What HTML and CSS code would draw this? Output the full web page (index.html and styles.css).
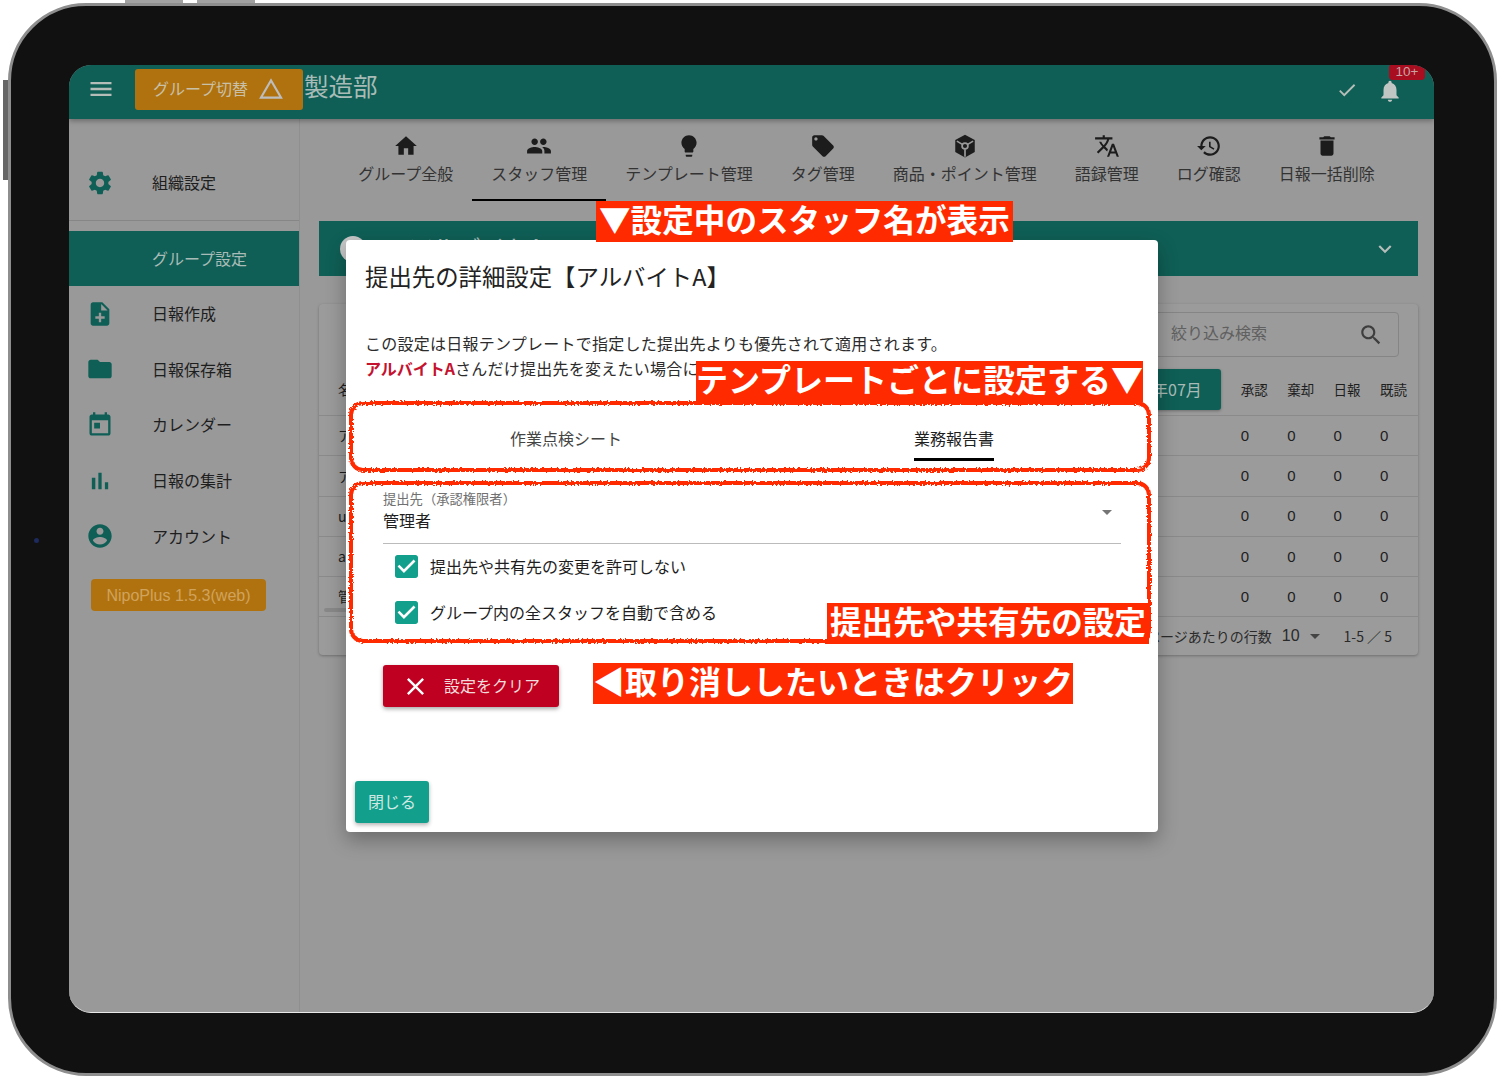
FILE: index.html
```html
<!doctype html>
<html lang="ja">
  <head>
    <meta charset="UTF-8">
    <meta name="viewport" content="width=device-width, initial-scale=1.0">
    <title>提出先の詳細設定</title>
    <link rel="stylesheet" href="styles.css">
  </head>
  <body>
    <svg class="defs" width="0" height="0" aria-hidden="true">
      <filter id="rough" x="-2%" y="-5%" width="104%" height="110%">
        <feTurbulence type="fractalNoise" baseFrequency="0.45" numOctaves="2" seed="4"></feTurbulence>
        <feDisplacementMap in="SourceGraphic" scale="4"></feDisplacementMap>
      </filter>
    </svg>

    <div class="device">
      <span class="btn-top btn-top-1"></span>
      <span class="btn-top btn-top-2"></span>
      <span class="btn-side"></span>
      <span class="camera"></span>

      <div class="screen">
        <!-- app bar -->
        <header class="appbar">
          <svg class="icon menu-icon" viewBox="0 0 24 24"><path d="M3 18h18v-2H3v2zm0-5h18v-2H3v2zm0-7v2h18V6H3z"/></svg>
          <button class="group-btn">
            <span>グループ切替</span>
            <svg class="icon" viewBox="0 0 24 24"><path d="M12 5.99L19.53 19H4.47L12 5.99M12 2L1 21h22L12 2z"/></svg>
          </button>
          <span class="appbar-title">製造部</span>
          <svg class="icon check-icon" viewBox="0 0 24 24"><path d="M9 16.17L4.83 12l-1.42 1.41L9 19 21 7l-1.41-1.41z"/></svg>
          <div class="bell">
            <svg class="icon" viewBox="0 0 24 24"><path d="M12 22c1.1 0 2-.9 2-2h-4c0 1.1.89 2 2 2zm6-6v-5c0-3.07-1.64-5.64-4.5-6.32V4c0-.83-.67-1.5-1.5-1.5s-1.5.67-1.5 1.5v.68C7.63 5.36 6 7.92 6 11v5l-2 2v1h16v-1l-2-2z"/></svg>
            <span class="badge">10+</span>
          </div>
        </header>

        <div class="app-body">
          <!-- side menu -->
          <nav class="sidebar">
            <div class="side-top">
              <svg class="icon" viewBox="0 0 24 24"><path d="M19.14 12.94c.04-.3.06-.61.06-.94 0-.32-.02-.64-.07-.94l2.03-1.58c.18-.14.23-.41.12-.61l-1.92-3.32c-.12-.22-.37-.29-.59-.22l-2.39.96c-.5-.38-1.03-.7-1.62-.94l-.36-2.54c-.04-.24-.24-.41-.48-.41h-3.84c-.24 0-.43.17-.47.41l-.36 2.54c-.59.24-1.13.57-1.62.94l-2.39-.96c-.22-.08-.47 0-.59.22L2.74 8.87c-.12.21-.08.47.12.61l2.03 1.58c-.05.3-.09.63-.09.94s.02.64.07.94l-2.03 1.58c-.18.14-.23.41-.12.61l1.92 3.32c.12.22.37.29.59.22l2.39-.96c.5.38 1.03.7 1.62.94l.36 2.54c.05.24.24.41.48.41h3.84c.24 0 .44-.17.47-.41l.36-2.54c.59-.24 1.13-.56 1.62-.94l2.39.96c.22.08.47 0 .59-.22l1.92-3.32c.12-.22.07-.47-.12-.61l-2.01-1.58zM12 15.6c-1.98 0-3.6-1.62-3.6-3.6s1.62-3.6 3.6-3.6 3.6 1.62 3.6 3.6-1.62 3.6-3.6 3.6z"/></svg>
              <span>組織設定</span>
            </div>
            <div class="side-item active"><span>グループ設定</span></div>
            <div class="side-item">
              <svg class="icon" viewBox="0 0 24 24"><path d="M14 2H6c-1.1 0-1.99.9-1.99 2L4 20c0 1.1.89 2 1.99 2H18c1.1 0 2-.9 2-2V8l-6-6zm2 14h-3v3h-2v-3H8v-2h3v-3h2v3h3v2zm-3-7V3.5L18.5 9H13z"/></svg>
              <span>日報作成</span>
            </div>
            <div class="side-item">
              <svg class="icon" viewBox="0 0 24 24"><path d="M10 4H4c-1.1 0-1.99.9-1.99 2L2 18c0 1.1.9 2 2 2h16c1.1 0 2-.9 2-2V8c0-1.1-.9-2-2-2h-8l-2-2z"/></svg>
              <span>日報保存箱</span>
            </div>
            <div class="side-item">
              <svg class="icon" viewBox="0 0 24 24"><path d="M19 3h-1V1h-2v2H8V1H6v2H5c-1.11 0-1.99.9-1.99 2L3 19c0 1.1.89 2 2 2h14c1.1 0 2-.9 2-2V5c0-1.1-.9-2-2-2zm0 16H5V8h14v11zM7 10h5v5H7z"/></svg>
              <span>カレンダー</span>
            </div>
            <div class="side-item">
              <svg class="icon" viewBox="0 0 24 24"><path d="M5 9.2h3V19H5zM10.6 5h2.8v14h-2.8zm5.6 8H19v6h-2.8z"/></svg>
              <span>日報の集計</span>
            </div>
            <div class="side-item">
              <svg class="icon" viewBox="0 0 24 24"><path d="M12 2C6.48 2 2 6.48 2 12s4.48 10 10 10 10-4.48 10-10S17.52 2 12 2zm0 3c1.66 0 3 1.34 3 3s-1.34 3-3 3-3-1.34-3-3 1.34-3 3-3zm0 14.2c-2.5 0-4.71-1.28-6-3.22.03-1.99 4-3.08 6-3.08 1.99 0 5.97 1.09 6 3.08-1.29 1.94-3.5 3.22-6 3.22z"/></svg>
              <span>アカウント</span>
            </div>
            <div class="version">NipoPlus 1.5.3(web)</div>
          </nav>

          <main class="content">
            <!-- tabs -->
            <div class="tabs">
              <div class="tab">
                <svg class="icon" viewBox="0 0 24 24"><path d="M10 20v-6h4v6h5v-8h3L12 3 2 12h3v8z"/></svg>
                <span>グループ全般</span>
              </div>
              <div class="tab active">
                <svg class="icon" viewBox="0 0 24 24"><path d="M16 11c1.66 0 2.99-1.34 2.99-3S17.66 5 16 5c-1.66 0-3 1.34-3 3s1.34 3 3 3zm-8 0c1.66 0 2.99-1.34 2.99-3S9.66 5 8 5C6.34 5 5 6.34 5 8s1.34 3 3 3zm0 2c-2.33 0-7 1.17-7 3.5V19h14v-2.5c0-2.33-4.67-3.5-7-3.5zm8 0c-.29 0-.62.02-.97.05 1.16.84 1.97 1.97 1.97 3.45V19h6v-2.5c0-2.33-4.67-3.5-7-3.5z"/></svg>
                <span>スタッフ管理</span>
              </div>
              <div class="tab">
                <svg class="icon" viewBox="0 0 24 24"><path d="M9 21c0 .55.45 1 1 1h4c.55 0 1-.45 1-1v-1H9v1zm3-19C8.14 2 5 5.14 5 9c0 2.38 1.19 4.47 3 5.74V17c0 .55.45 1 1 1h6c.55 0 1-.45 1-1v-2.26c1.81-1.27 3-3.36 3-5.74 0-3.86-3.14-7-7-7z"/></svg>
                <span>テンプレート管理</span>
              </div>
              <div class="tab">
                <svg class="icon" viewBox="0 0 24 24"><path d="M21.41 11.58l-9-9C12.05 2.22 11.55 2 11 2H4c-1.1 0-2 .9-2 2v7c0 .55.22 1.05.59 1.42l9 9c.36.36.86.58 1.41.58.55 0 1.05-.22 1.41-.59l7-7c.37-.36.59-.86.59-1.41 0-.55-.23-1.06-.59-1.42zM5.5 7C4.67 7 4 6.33 4 5.5S4.67 4 5.5 4 7 4.67 7 5.5 6.33 7 5.5 7z"/></svg>
                <span>タグ管理</span>
              </div>
              <div class="tab">
                <svg class="icon" viewBox="0 0 24 24">
                  <path d="M12 1.5l9 5v11l-9 5-9-5v-11z"/>
                  <path class="cube-lines" d="M4.5 7.5l5 3M19.500 7.500l-5 3M12 15v7"/>
                  <circle class="cube-lines" cx="12" cy="12" r="2.700"/>
                </svg>
                <span>商品・ポイント管理</span>
              </div>
              <div class="tab">
                <svg class="icon" viewBox="0 0 24 24"><path d="M12.87 15.07l-2.54-2.51.03-.03c1.74-1.94 2.98-4.17 3.71-6.53H17V4h-7V2H8v2H1v1.99h11.17C11.5 7.92 10.44 9.75 9 11.35 8.07 10.32 7.3 9.19 6.69 8h-2c.73 1.63 1.73 3.17 2.98 4.56l-5.09 5.02L4 19l5-5 3.11 3.11.76-2.04zM18.5 10h-2L12 22h2l1.12-3h4.75L21 22h2l-4.5-12zm-2.62 7l1.62-4.33L19.12 17h-3.24z"/></svg>
                <span>語録管理</span>
              </div>
              <div class="tab">
                <svg class="icon" viewBox="0 0 24 24"><path d="M13 3c-4.97 0-9 4.03-9 9H1l3.89 3.89.07.14L9 12H6c0-3.87 3.13-7 7-7s7 3.13 7 7-3.13 7-7 7c-1.93 0-3.68-.79-4.94-2.06l-1.42 1.42C8.27 19.99 10.51 21 13 21c4.97 0 9-4.03 9-9s-4.03-9-9-9zm-1 5v5l4.28 2.54.72-1.21-3.5-2.08V8H12z"/></svg>
                <span>ログ確認</span>
              </div>
              <div class="tab">
                <svg class="icon" viewBox="0 0 24 24"><path d="M6 19c0 1.1.9 2 2 2h8c1.1 0 2-.9 2-2V7H6v12zM19 4h-3.500l-1-1h-5l-1 1H5v2h14V4z"/></svg>
                <span>日報一括削除</span>
              </div>
            </div>

            <div class="staff-bar">
              <span class="avatar"></span>
              <span class="staff-name">アルバイトA</span>
              <svg class="icon" viewBox="0 0 24 24"><path d="M16.59 8.59L12 13.17 7.41 8.59 6 10l6 6 6-6z"/></svg>
            </div>

            <section class="card">
              <div class="card-top">
                <div class="search">
                  <span>絞り込み検索</span>
                  <svg class="icon" viewBox="0 0 24 24"><path d="M15.5 14h-.79l-.28-.27C15.41 12.59 16 11.11 16 9.5 16 5.91 13.09 3 9.5 3S3 5.91 3 9.5 5.91 16 9.5 16c1.61 0 3.09-.59 4.23-1.57l.27.28v.79l5 4.99L20.49 19l-4.99-5zm-6 0C7.01 14 5 11.99 5 9.5S7.01 5 9.5 5 14 7.01 14 9.5 11.99 14 9.5 14z"/></svg>
                </div>
              </div>
              <div class="row row-head">
                <span class="name">名前</span>
                <span class="month-btn">年07月</span>
                <span class="num">承認</span><span class="num">棄却</span><span class="num">日報</span><span class="num">既読</span>
              </div>
              <div class="row">
                <span class="name">アルバイトA</span>
                <span class="num">0</span><span class="num">0</span><span class="num">0</span><span class="num">0</span>
              </div>
              <div class="row">
                <span class="name">アルバイトB</span>
                <span class="num">0</span><span class="num">0</span><span class="num">0</span><span class="num">0</span>
              </div>
              <div class="row">
                <span class="name">user</span>
                <span class="num">0</span><span class="num">0</span><span class="num">0</span><span class="num">0</span>
              </div>
              <div class="row">
                <span class="name">admin</span>
                <span class="num">0</span><span class="num">0</span><span class="num">0</span><span class="num">0</span>
              </div>
              <div class="row">
                <span class="name">管理者</span>
                <span class="num">0</span><span class="num">0</span><span class="num">0</span><span class="num">0</span>
              </div>
              <div class="scroll-thumb"></div>
              <div class="pager">
                <span>ページあたりの行数</span>
                <span class="pager-size">10</span>
                <svg class="icon" viewBox="0 0 24 24"><path d="M7 10l5 5 5-5z"/></svg>
                <span class="pager-range">1-5 ／ 5</span>
              </div>
            </section>
          </main>
        </div>

        <!-- dialog -->
        <div class="dialog">
          <h2 class="dialog-title">提出先の詳細設定【アルバイトA】</h2>
          <p class="dialog-text">この設定は日報テンプレートで指定した提出先よりも優先されて適用されます。<br><b>アルバイトA</b>さんだけ提出先を変えたい場合に</p>

          <div class="tpl-tabs">
            <div class="tpl-tab"><span>作業点検シート</span></div>
            <div class="tpl-tab active"><span>業務報告書</span></div>
          </div>

          <div class="select">
            <div class="select-label">提出先（承認権限者）</div>
            <div class="select-value">管理者</div>
            <svg class="icon" viewBox="0 0 24 24"><path d="M7 10l5 5 5-5z"/></svg>
          </div>

          <label class="check-row">
            <svg class="icon" viewBox="3 3 18 18"><path d="M19 3H5c-1.11 0-2 .9-2 2v14c0 1.1.89 2 2 2h14c1.11 0 2-.9 2-2V5c0-1.1-.89-2-2-2zm-9 14l-5-5 1.41-1.41L10 14.17l7.59-7.59L19 8l-9 9z"/></svg>
            <span>提出先や共有先の変更を許可しない</span>
          </label>
          <label class="check-row">
            <svg class="icon" viewBox="3 3 18 18"><path d="M19 3H5c-1.11 0-2 .9-2 2v14c0 1.1.89 2 2 2h14c1.11 0 2-.9 2-2V5c0-1.1-.89-2-2-2zm-9 14l-5-5 1.41-1.41L10 14.17l7.59-7.59L19 8l-9 9z"/></svg>
            <span>グループ内の全スタッフを自動で含める</span>
          </label>

          <button class="clear-btn">
            <svg class="icon" viewBox="5 5 14 14"><path d="M19 6.41L17.59 5 12 10.59 6.41 5 5 6.41 10.59 12 5 17.59 6.41 19 12 13.41 17.59 19 19 17.59 13.41 12z"/></svg>
            <span>設定をクリア</span>
          </button>

          <div class="dialog-actions">
            <button class="close-btn">閉じる</button>
          </div>
        </div>

        <!-- annotations drawn over the screenshot -->
        <div class="rough-box rough-tabs"></div>
        <div class="rough-box rough-select"></div>
        <div class="note note-staff">▼設定中のスタッフ名が表示</div>
        <div class="note note-tpl">テンプレートごとに設定する▼</div>
        <div class="note note-dest">提出先や共有先の設定</div>
        <div class="note note-clear">◀取り消ししたいときはクリック</div>
      </div>
    </div>
  </body>
</html>
```

FILE: styles.css
```css
* {
  box-sizing: border-box;
}

html, body {
  margin: 0;
  height: 100%;
  background: #fff;
  overflow: hidden;
}

body {
  font-family: "Noto Sans CJK JP", "Noto Sans", "Liberation Sans", sans-serif;
  font-size: 16px;
  line-height: 1.2;
  color: #1e1e1e;
}

button {
  font: inherit;
  border: 0;
  padding: 0;
}

.defs {
  position: absolute;
}

.icon {
  display: block;
  fill: currentColor;
  flex: none;
}

/* device frame */
.device {
  position: relative;
  width: 1489px;
  height: 1073px;
  margin: 3px 0 0 8px;
  padding: 59px 60px 60px 58px;
  background: #111;
  border: 3px solid #8e8e8e;
  border-radius: 78px;
}

.btn-top {
  position: absolute;
  top: -6px;
  width: 58px;
  height: 3px;
  background: #a2a2a2;
}

.btn-top-1 { left: 114px; }
.btn-top-2 { left: 186px; }

.btn-side {
  position: absolute;
  left: -8px;
  top: 74px;
  width: 5px;
  height: 100px;
  background: #666;
}

.camera {
  position: absolute;
  left: 23px;
  top: 532px;
  width: 5px;
  height: 5px;
  border-radius: 50%;
  background: #1c2a5c;
}

.screen {
  position: relative;
  display: flex;
  flex-direction: column;
  width: 1365px;
  height: 948px;
  background: #999;
  border-radius: 22px;
  border-bottom: 1px solid #e8e8e8;
  overflow: hidden;
}

/* app bar */
.appbar {
  display: flex;
  align-items: center;
  flex: none;
  height: 54px;
  padding: 0 10px 6px 18px;
  background: #0f5f56;
  color: #b5bdb9;
  box-shadow: 0 2px 5px rgba(0, 0, 0, .3);
  position: relative;
}

.menu-icon {
  width: 28px;
  height: 28px;
}

.group-btn {
  display: flex;
  align-items: center;
  justify-content: space-between;
  width: 168px;
  height: 41px;
  margin: 0 0 0 20px;
  padding: 0 19px 0 18px;
  background: #b0720f;
  color: #c9c0a8;
  border-radius: 3px;
}

.group-btn .icon {
  width: 26px;
  height: 26px;
  color: #bdbdbd;
}

.appbar-title {
  margin: -5px 0 0 1px;
  font-size: 24.5px;
  line-height: 1;
  color: #a9bbb6;
}

.check-icon {
  width: 22px;
  height: 22px;
  margin: 2px 19px 0 auto;
}

.bell {
  position: relative;
  width: 26px;
  height: 26px;
  margin: 4px 21px 0 0;
}

.bell .icon {
  width: 26px;
  height: 26px;
  color: #c0c6c4;
}

.badge {
  position: absolute;
  left: 12px;
  top: -14px;
  width: 36px;
  height: 16px;
  border-radius: 4px;
  background: #a80d20;
  color: #c9a3a3;
  font: 13.5px/16px "Liberation Sans", sans-serif;
  text-align: center;
}

/* side menu */
.app-body {
  display: flex;
  flex: 1;
  min-height: 0;
}

.sidebar {
  flex: none;
  width: 231px;
  border-right: 1px solid #8f8f8f;
}

.side-top,
.side-item {
  display: flex;
  align-items: center;
  padding-left: 17px;
  color: #0f5f56;
}

.side-top {
  height: 102px;
  padding-top: 26px;
  border-bottom: 1px solid #868686;
  margin-bottom: 10px;
}

.side-item {
  height: 55.6px;
}

.side-top .icon,
.side-item .icon {
  width: 28px;
  height: 28px;
}

.side-top span,
.side-item span {
  margin-left: 38px;
  color: #1e1e1e;
}

.side-item.active {
  height: 55px;
  background: #0f5f56;
}

.side-item.active span {
  margin-left: 66px;
  color: #a9bbb6;
}

.version {
  width: 175px;
  height: 32px;
  margin: 15px 0 0 22px;
  border-radius: 4px;
  background: #b0720f;
  color: #d0a35c;
  font: 16px/33px "Liberation Sans", sans-serif;
  text-align: center;
}

/* main */
.content {
  flex: 1;
  min-width: 0;
  padding: 0 16px 0 19px;
}

.tabs {
  display: flex;
  justify-content: center;
  height: 82px;
  margin-right: 4px;
}

.tab {
  display: flex;
  flex-direction: column;
  align-items: center;
  padding: 14px 19px 0;
  color: #1c1c1c;
}

.tab .icon {
  width: 26px;
  height: 26px;
}

.cube-lines {
  fill: none;
  stroke: #999;
  stroke-width: 1.6;
}

.tab span {
  margin-top: 5px;
  color: #333;
}

.tab.active {
  box-shadow: inset 0 -2px 0 #000;
}

.staff-bar {
  display: flex;
  align-items: center;
  justify-content: flex-end;
  height: 55px;
  margin-top: 20px;
  padding-right: 20px;
  background: #0f5f56;
  color: #b5bdb9;
  position: relative;
}

.staff-bar .icon {
  width: 26px;
  height: 26px;
}

.avatar {
  position: absolute;
  left: 21px;
  top: 15px;
  width: 26px;
  height: 26px;
  border-radius: 50%;
  background: #c6c6c6;
}

.staff-name {
  position: absolute;
  left: 90px;
  top: 16px;
  font-size: 24px;
  line-height: 20px;
  color: #a9bbb6;
}

.card {
  height: 351px;
  margin-top: 28px;
  padding-top: 8px;
  background: #9b9b9b;
  border-radius: 4px;
  box-shadow: 0 1px 3px rgba(0, 0, 0, .28);
}

.card-top {
  display: flex;
  justify-content: flex-end;
  padding-right: 19px;
}

.search {
  display: flex;
  align-items: center;
  justify-content: space-between;
  width: 400px;
  height: 45px;
  padding: 0 14px 0 171px;
  border: 1px solid #858585;
  border-radius: 4px;
  color: #606060;
}

.search span {
  margin-top: -3px;
}

.search .icon {
  width: 26px;
  height: 26px;
  color: #3e3e3e;
}

.row {
  display: flex;
  align-items: center;
  height: 40.3px;
  padding: 0 0 0 19px;
  border-bottom: 1px solid #8a8a8a;
  font-size: 14px;
  color: #1e1e1e;
}

.row-head {
  position: relative;
  height: 59px;
  padding-top: 7px;
}

.name {
  margin-right: auto;
}

.month-btn {
  display: flex;
  align-items: center;
  justify-content: flex-end;
  width: 260px;
  height: 41px;
  margin: 0 20px 0 0;
  padding-right: 19px;
  background: #0f5f56;
  border-radius: 3px;
  color: #a9bbb6;
  font-size: 16px;
  box-shadow: 0 1px 3px rgba(0, 0, 0, .3);
}

.num {
  width: 46.4px;
  font-family: "Liberation Sans", "Noto Sans CJK JP", sans-serif;
}

.num:last-child {
  width: 38px;
}

.row .num {
  font-size: 15px;
}

.row-head .num {
  font-family: inherit;
  font-size: 13.5px;
}

.scroll-thumb {
  width: 30px;
  height: 4px;
  margin: -9px 0 5px 5px;
  background: #888;
  border-radius: 2px;
}

.pager {
  display: flex;
  align-items: center;
  justify-content: flex-end;
  height: 37px;
  padding-right: 26px;
  font-size: 14px;
  color: #2a2a2a;
}

.pager-size {
  margin-left: 10px;
  font: 16px "Liberation Sans", sans-serif;
}

.pager .icon {
  width: 24px;
  height: 24px;
  margin: 0 6px 0 3px;
  color: #444;
}

.pager-range {
  margin-left: 11px;
  font-size: 14px;
}

/* dialog */
.dialog {
  position: absolute;
  left: 277px;
  top: 175px;
  width: 812px;
  height: 592px;
  padding: 19px 37px 0;
  background: #fff;
  border-radius: 4px;
  box-shadow: 0 8px 20px rgba(0, 0, 0, .3);
}

.dialog-title {
  margin: 0 0 0 -18px;
  font-size: 23.4px;
  font-weight: 400;
  line-height: 34px;
  color: #222;
}

.dialog-text {
  height: 64px;
  margin: 38px 0 0 -18px;
  line-height: 25px;
  letter-spacing: .25px;
  color: #2c2c2c;
}

.dialog-text b {
  color: #c4122f;
  letter-spacing: 0;
}

.tpl-tabs {
  display: flex;
  margin-left: -11px;
  margin-right: -27px;
  height: 68px;
}

.tpl-tab {
  flex: 1;
  text-align: center;
  padding-top: 31px;
  color: #444;
}

.tpl-tab span {
  display: inline-block;
  height: 35px;
  padding-top: 3px;
  white-space: nowrap;
}

.tpl-tab.active span {
  color: #1e1e1e;
  border-bottom: 3px solid #000;
}

.select {
  position: relative;
  height: 61px;
  margin-top: 20px;
  padding-top: 7px;
  border-bottom: 1px solid #bbb;
}

.select-label {
  font-size: 13.3px;
  line-height: 18px;
  color: #707070;
}

.select-value {
  margin-top: 1px;
  line-height: 22px;
  color: #1e1e1e;
}

.select .icon {
  position: absolute;
  right: 2px;
  top: 17px;
  width: 24px;
  height: 24px;
  color: #757575;
}

.check-row {
  display: flex;
  align-items: center;
  gap: 12px;
  height: 23px;
  margin: 11px 0 0 12px;
  color: #1e1e1e;
}

.check-row + .check-row {
  margin-top: 23px;
}

.check-row .icon {
  width: 23px;
  height: 23px;
  color: #12a08c;
}

.clear-btn {
  display: flex;
  align-items: center;
  width: 176px;
  height: 42px;
  margin-top: 41px;
  padding-left: 24px;
  background: #c00020;
  border-radius: 3px;
  color: #f0dcdc;
  box-shadow: 0 2px 4px rgba(0, 0, 0, .35);
}

.clear-btn .icon {
  width: 17px;
  height: 17px;
  margin-right: 20px;
  color: #fff;
}

.dialog-actions {
  margin: 74px 0 0 -28px;
}

.close-btn {
  width: 74px;
  height: 42px;
  background: #12a08c;
  border-radius: 3px;
  color: #cfe8e4;
  box-shadow: 0 2px 4px rgba(0, 0, 0, .3);
}

/* annotations */
.rough-box {
  position: absolute;
  left: 280px;
  width: 802px;
  border: 4px solid #ff2a00;
  border-radius: 14px;
  filter: url(#rough);
}

.rough-tabs {
  top: 336px;
  height: 71px;
}

.rough-select {
  top: 416px;
  height: 162px;
}

.note {
  position: absolute;
  height: 41px;
  padding: 0 3px;
  background: #ff2a00;
  color: #fff;
  font-size: 32px;
  font-weight: 700;
  line-height: 34px;
  white-space: nowrap;
}

.note-staff { left: 527px; top: 136px; font-size: 31.6px; }
.note-tpl { left: 627px; top: 296px; padding: 0; }
.note-dest { left: 758px; top: 538px; font-size: 31.6px; }
.note-clear { left: 524px; top: 598px; padding: 0; }
```
